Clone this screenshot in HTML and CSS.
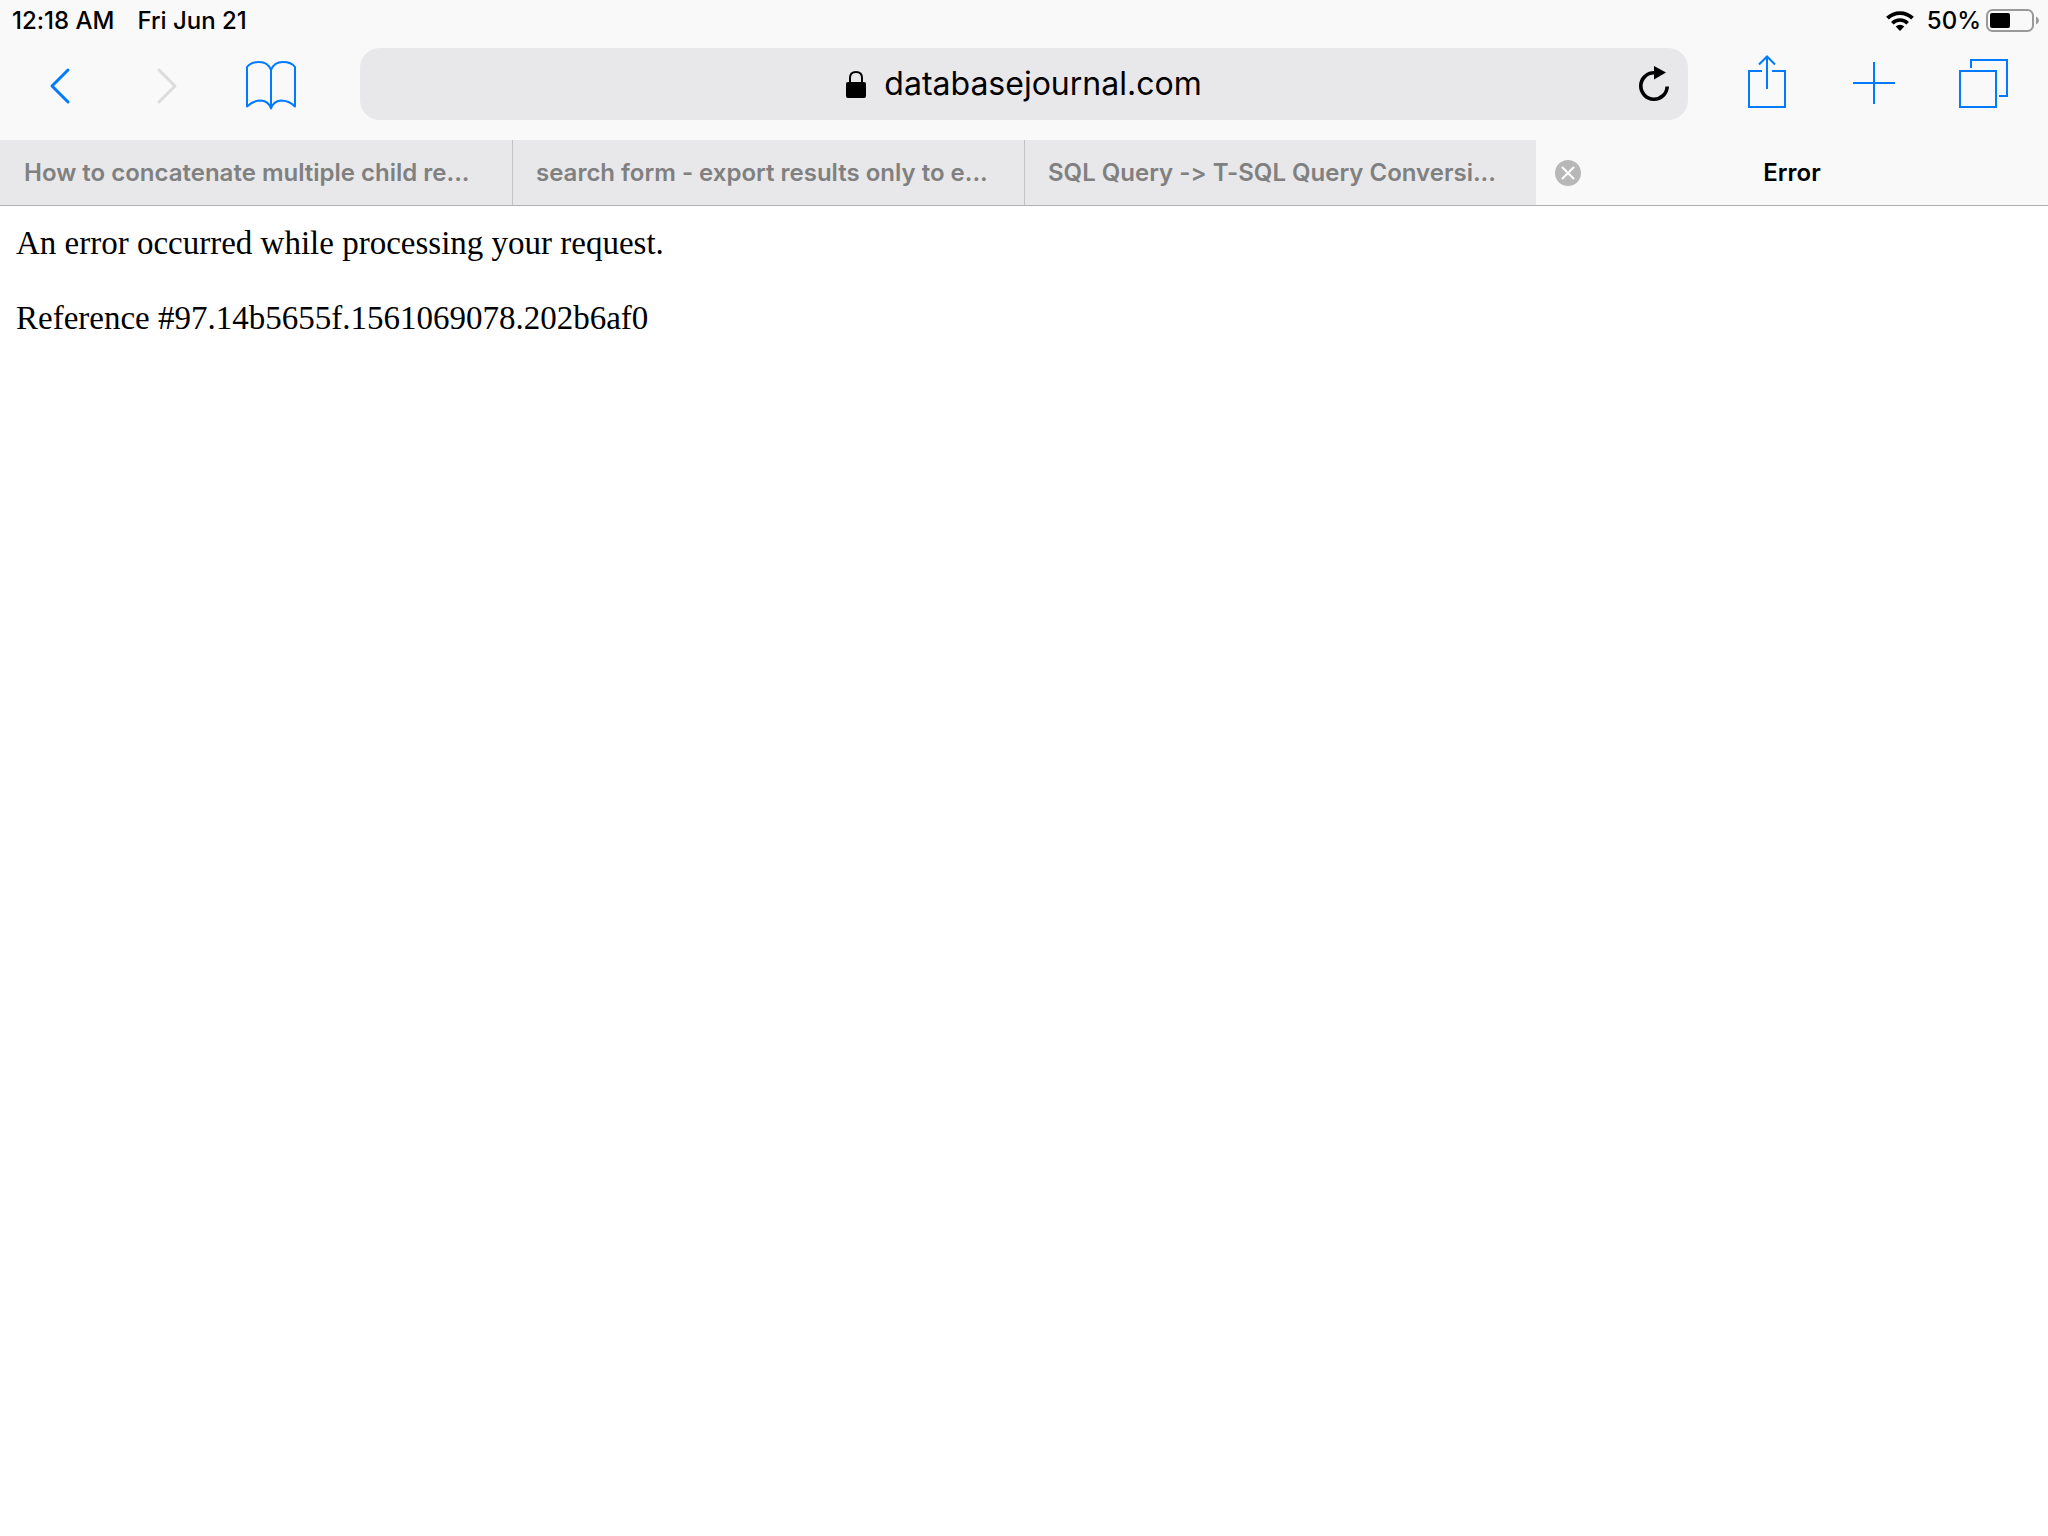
FILE: index.html
```html
<!DOCTYPE html>
<html lang="en">
<head>
<meta charset="utf-8">
<title>Error</title>
<link rel="stylesheet" href="styles.css">
</head>
<body>
<header class="browser">
  <div class="status">
    <span>12:18 AM</span>
    <span>Fri Jun 21</span>
    <div class="status-right">
      <svg class="wifi" width="28" height="20" viewBox="0 0 28 20" aria-hidden="true">
        <path d="M1.500 7.200A17.700 17.700 0 0 1 26.500 7.200" fill="none" stroke="#000" stroke-width="3.800"/>
        <path d="M6.300 12.200A10.900 10.900 0 0 1 21.700 12.200" fill="none" stroke="#000" stroke-width="3.600"/>
        <path d="M14 20L9.700 15.600A6.200 6.200 0 0 1 18.300 15.600Z"/>
      </svg>
      <span>50%</span>
      <svg class="battery" width="54" height="24" viewBox="0 0 54 24" aria-hidden="true">
        <rect x="1" y="1" width="46" height="21" rx="5.500" fill="none" stroke="#999" stroke-width="2"/>
        <rect x="4" y="4" width="20" height="15" rx="2"/>
        <path d="M50 7.500Q53 9 53 11.500T50 15.500Z" fill="#999"/>
      </svg>
    </div>
  </div>

  <div class="toolbar">
    <nav class="tools tools-left">
      <button class="tool" aria-label="Back"><svg width="60" height="72" viewBox="0 0 60 72"><path class="chevron" d="M38 22L22 38L38 54"/></svg></button>
      <button class="tool" aria-label="Forward" disabled><svg width="60" height="72" viewBox="0 0 60 72"><path class="chevron" d="M23 22L39 38L23 54"/></svg></button>
      <button class="tool" aria-label="Bookmarks"><svg width="60" height="72" viewBox="0 0 60 72"><path stroke-linejoin="round" d="M29 22C27 16.500 22.500 14 17 14C12 14 7.500 15.500 5 19V58.500C9 54.500 13.500 52.500 19 52.500C24 53 27.500 55.500 29 60.500V22C31 16.500 35.500 14 41 14C46 14 50.500 15.500 53 19V58.500C49 54.500 44.500 52.500 39 52.500C34 53 30.500 55.500 29 60.500"/></svg></button>
    </nav>
    <div class="address">
      <label class="field">
        <svg width="20" height="27" viewBox="0 0 20 27" aria-hidden="true"><rect y="11" width="20" height="16" rx="2"/><path d="M4 12V7Q4 1 10 1T16 7V12" fill="none" stroke="#000" stroke-width="2"/></svg>
        <input class="url" type="text" value="databasejournal.com" aria-label="Address">
      </label>
      <button class="reload" aria-label="Reload"><svg width="32" height="72" viewBox="0 0 32 72"><path d="M29.200 38.500A13.200 13.200 0 1 1 16 24.800" fill="none" stroke="#000" stroke-width="3.600"/><path d="M16 18L28 24.500L16 31.500Z"/></svg></button>
    </div>
    <nav class="tools tools-right">
      <button class="tool" aria-label="Share"><svg width="60" height="72" viewBox="0 0 60 72"><path d="M25 23H12V59H48V23H35M30 41V8M22 16.500L30 8.500L38 16.500"/></svg></button>
      <button class="tool" aria-label="New tab"><svg width="60" height="72" viewBox="0 0 60 72"><path d="M8 35H50M29 14V56"/></svg></button>
      <button class="tool" aria-label="Show tabs"><svg width="60" height="72" viewBox="0 0 60 72"><path d="M7 23H43V59H7ZM18 20V12H54V48H46"/></svg></button>
    </nav>
  </div>

  <nav class="tabs">
    <a class="tab" href="#">How to concatenate multiple child re...</a>
    <a class="tab" href="#">search form - export results only to e...</a>
    <a class="tab" href="#">SQL Query -&gt; T-SQL Query Conversi...</a>
    <div class="tab tab-active">
      <button class="close" aria-label="Close tab"><svg width="26" height="26" viewBox="0 0 26 26"><circle cx="13" cy="13" r="13" fill="#b8b8b8"/><path d="M7.500 7.500L18.500 18.500M18.500 7.500L7.500 18.500" stroke="#fff" stroke-width="2" stroke-linecap="round"/></svg></button>
      <a class="tab-title" href="#" aria-current="page">Error</a>
    </div>
  </nav>
</header>
<main class="page">
  <p>An error occurred while processing your request.</p>
  <p>Reference #97.14b5655f.1561069078.202b6af0</p>
</main>
</body>
</html>
```
FILE: styles.css
```css
* { box-sizing: border-box; }

body {
  margin: 0;
  background: #fff;
  color: #000;
  font-family: Inter, "Liberation Sans", sans-serif;
  font-variant-ligatures: none;
}

button {
  padding: 0;
  border: 0;
  background: none;
}

svg { display: block; }

a {
  color: inherit;
  text-decoration: none;
}

.browser {
  background: #f9f9f9;
  border-bottom: 1px solid #b0b0b2;
}

.status {
  display: flex;
  align-items: center;
  gap: 23px;
  height: 41px;
  padding: 0 8px 0 12px;
  font-size: 24px;
  font-weight: 500;
}

.status-right {
  display: flex;
  align-items: center;
  margin-left: auto;
}

.wifi { margin-right: 13px; }
.battery { margin-left: 5px; }

.toolbar {
  display: flex;
  padding: 7px 11px 20px 7px;
}

.tools { display: flex; }
.tools-left { margin-right: 35px; }
.tools-right { margin-left: 25px; }

.tool {
  display: flex;
  justify-content: center;
  width: 106px;
  fill: none;
  stroke: #007aff;
  stroke-width: 2;
}

.tools-right .tool { width: 108px; }
.tool:disabled { stroke: #dcdcdc; }

.chevron {
  stroke-width: 3;
  stroke-linecap: round;
  stroke-linejoin: round;
}

.address {
  display: grid;
  grid-template-columns: 1fr auto 1fr;
  align-items: center;
  flex: 1;
  height: 72px;
  padding: 0 18px;
  border-radius: 20px;
  background: #e8e8ea;
}

.field {
  display: flex;
  grid-column: 2;
  align-items: center;
  gap: 18px;
}

.url {
  field-sizing: content;
  padding: 0;
  border: 0;
  outline: 0;
  background: none;
  color: #000;
  font: 400 32px/40px Inter, "Liberation Sans", sans-serif;
}

.reload { justify-self: end; }

.tabs {
  display: grid;
  grid-template-columns: repeat(4, minmax(0, 1fr));
}

.tab {
  height: 65px;
  padding: 0 23px;
  border-left: 1px solid #c2c2c4;
  background: #e8e8ea;
  color: #808080;
  font-size: 24px;
  font-weight: 600;
  line-height: 65px;
  white-space: nowrap;
}

.tab:first-child { border-left-color: transparent; background-clip: border-box; }

.tab-active {
  display: grid;
  grid-template-columns: 1fr auto 1fr;
  align-items: center;
  padding: 0 19px;
  border-left: 0;
  background: #f9f9f9;
  color: #000;
}

.close { justify-self: start; }

.page {
  padding: 19px 16px;
  font: 33px/37px "Liberation Serif", "Times New Roman", serif;
}

.page p { margin: 0 0 38px; }
```
